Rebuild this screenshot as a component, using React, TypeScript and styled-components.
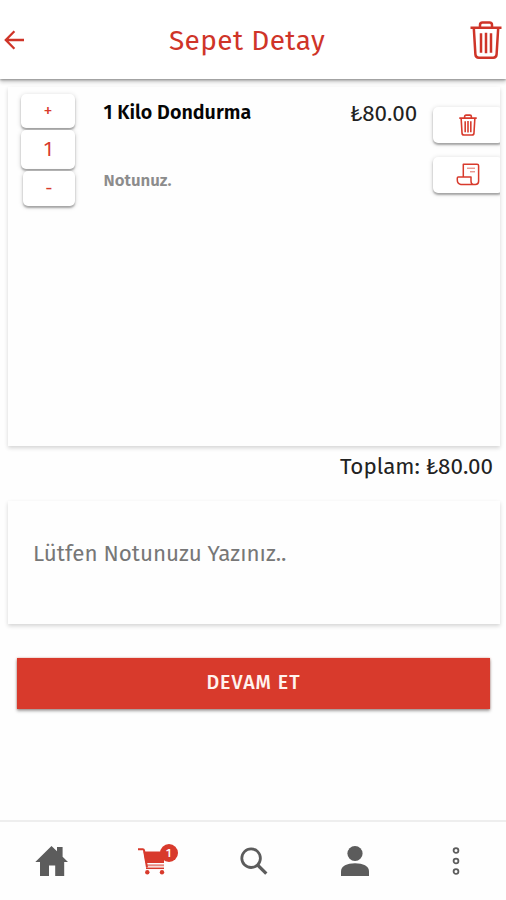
import React from "react";
import styled, { createGlobalStyle, css } from "styled-components";

const RED = "#d83a2c";
const INK_RED = "#cf3428";

const GlobalStyle = createGlobalStyle`
  *, *::before, *::after { box-sizing: border-box; }
  html, body { margin: 0; padding: 0; background: #fefefe; }
  body { font-family: "Fira Sans", "Noto Sans", sans-serif; color: #222; overflow: hidden; }
  button { font-family: inherit; border: 0; padding: 0; background: none; }
  svg { display: block; }
`;

const Screen = styled.div`
  width: 506px;
  height: 900px;
  display: flex;
  flex-direction: column;
  background: #fefefe;
`;

const Header = styled.header`
  flex: none;
  height: 79px;
  display: grid;
  grid-template-columns: 54px 1fr 66px;
  align-items: center;
  background: #fff;
  box-shadow: 0 1px 2px rgba(0, 0, 0, 0.3), 0 3px 4px rgba(0, 0, 0, 0.22);
  color: ${INK_RED};
`;

const BackButton = styled.button`
  padding-left: 4px;
  padding-top: 1px;
  color: inherit;
`;

const EmptyButton = styled.button`
  justify-self: end;
  padding-right: 4px;
  padding-top: 1px;
  color: inherit;
`;

/* Keeps each label on one line at its own size and tracking. */
const Label = styled.span<{ $size: number; $track?: number }>`
  display: inline-block;
  white-space: pre;
  font-size: ${(p) => p.$size}px;
  line-height: 30px;
  letter-spacing: ${(p) => p.$track ?? 0}px;
`;

const Title = styled.h1`
  margin: 0;
  padding-bottom: 1px;
  font-weight: 400;
  text-align: center;
`;

const cardShadow = css`
  background: #fefefe;
  box-shadow: 0 2px 4px rgba(0, 0, 0, 0.17);
`;

const CartFrame = styled.div`
  flex: none;
  margin: 8px 6px 0 8px;
  height: 359px;
  ${cardShadow}
`;

const CartItem = styled.section`
  height: 100%;
  display: flex;
  overflow: hidden;
`;

const Stepper = styled.div`
  width: 95.500px;
  padding: 7px 0 0 13px;
  display: flex;
  flex-direction: column;
  gap: 2px;
`;

const tileShadow = css`
  background: #fff;
  border-radius: 5px;
  box-shadow: 0 2px 2px rgba(0, 0, 0, 0.28), 0 1px 5px rgba(0, 0, 0, 0.18);
`;

const StepTile = styled.button<{ $height: number; $inset?: number; $size: number; $lift?: number }>`
  ${tileShadow}
  width: ${(p) => 54 - (p.$inset ?? 0)}px;
  height: ${(p) => p.$height}px;
  margin-left: ${(p) => p.$inset ?? 0}px;
  padding-bottom: ${(p) => p.$lift ?? 0}px;
  display: flex;
  align-items: center;
  justify-content: center;
  font-size: ${(p) => p.$size}px;
  line-height: 20px;
  color: ${RED};
`;

const ItemInfo = styled.div`
  flex: 1;
  display: flex;
  flex-direction: column;
  padding-top: 11px;
`;

const ItemName = styled.strong`
  height: 67px;
  color: #050505;
  font-weight: 600;
`;

const ItemNote = styled.span`
  font-weight: 600;
  color: #8c8c8c;
`;

const Price = styled.div`
  width: 83px;
  padding-top: 12px;
  color: #222;
`;

const ItemActions = styled.div`
  width: 67px;
  display: flex;
  flex-direction: column;
  gap: 14px;
  padding-top: 20px;
`;

const ActionTile = styled.button`
  ${tileShadow}
  width: 70px;
  height: 36px;
  display: flex;
  align-items: center;
  justify-content: center;
  color: ${RED};
`;

const Total = styled.div`
  flex: none;
  height: 55px;
  padding: 6px 13px 0 0;
  text-align: right;
  color: #222;
`;

const NoteCard = styled.section`
  flex: none;
  margin: 0 6px 0 8px;
  height: 123px;
  padding: 38px 0 0 25px;
  color: #777;
  ${cardShadow}
`;

const ContinueButton = styled.button`
  flex: none;
  margin: 34px 16px 0 17px;
  height: 51px;
  padding-bottom: 2px;
  color: #fff3ef;
  background: ${RED};
  box-shadow: 0 2px 3px rgba(0, 0, 0, 0.36), 0 0 2px rgba(190, 50, 30, 0.4);
  font-weight: 500;
`;

const TabBar = styled.nav`
  flex: none;
  margin-top: auto;
  height: 80px;
  padding-left: 1px;
  border-top: 2px solid #eeeeee;
  display: grid;
  grid-template-columns: repeat(5, 1fr);
  background: #fefefe;
`;

const Tab = styled.button<{ $active?: boolean }>`
  display: flex;
  align-items: center;
  justify-content: center;
  color: ${(p) => (p.$active ? RED : "#5c5c5c")};
`;

const CartBox = styled.span`
  position: relative;
  width: 40px;
  height: 40px;
  margin-left: 10px;
`;

const Badge = styled.span`
  position: absolute;
  left: 22px;
  top: 3px;
  width: 18px;
  height: 18px;
  border-radius: 50%;
  background: ${RED};
  color: #fff;
  font-size: 11.500px;
  line-height: 18px;
  font-weight: 500;
  text-align: center;
`;

const BackIcon = () => (
  <svg width="21" height="20" viewBox="0 0 21 20" fill="none" stroke="currentColor" strokeWidth="2.3">
    <path d="M20 10H1.8M10.4 1.3L1.8 10l8.600 8.7" />
  </svg>
);

const TrashIcon = ({ width, height, weight }: { width: number; height: number; weight: number }) => (
  <svg width={width} height={height} viewBox="0 0 32 38" fill="none" stroke="currentColor" strokeWidth={weight}>
    <path d="M.5 6.8h31M10 6.3V4q0-2.5 2.5-2.5h7Q22 1.500 22 4v2.300M3.800 7l1.600 26.400q.2 3.300 3.400 3.300h14.400q3.200 0 3.400-3.300L28.200 7M11 12.300v19.400M16 11.700v20.600M21 12.300v19.400" />
  </svg>
);

const ReceiptIcon = () => (
  <svg width="24" height="24" viewBox="0 0 24 24" fill="none" stroke="currentColor" strokeWidth="1.5" strokeLinejoin="round">
    <path d="M7.300 14V1.200h13.800q1.500 0 1.500 1.500v15.600q0 3.200-3.200 3.200H4.800Q1.300 20.800 1.300 17v-2q0-1 1-1H15v4.100q0 3.400 2.400 3.400" />
    <path d="M11 5.200h8M14 8.800h5" strokeWidth="1" opacity=".75" />
  </svg>
);

const HomeIcon = () => (
  <svg width="34" height="32" viewBox="0 0 34 32" fill="currentColor">
    <path d="M16.500 1l5.500 5.300V2h5.600v9.700L33 17h-3.800v14h-9V20.500H14V31H5V17H.3z" />
  </svg>
);

const CartIcon = () => (
  <svg width="40" height="40" viewBox="0 0 40 40" fill="none" stroke="currentColor">
    <path d="M0 8.200h4.800q1 0 1.200 1l3 17.300" strokeWidth="2" />
    <path d="M5.500 10.500H26V22H7.700z" fill="currentColor" stroke="none" />
    <path d="M8 24.300h18" strokeWidth="2" opacity=".6" />
    <path d="M8 27.300h18" strokeWidth="1.500" />
    <circle cx="9.300" cy="31.300" r="2.200" fill="currentColor" stroke="none" />
    <circle cx="24" cy="31.300" r="2.200" fill="currentColor" stroke="none" />
  </svg>
);

const SearchIcon = () => (
  <svg width="28" height="28" viewBox="0 0 28 28" fill="none" stroke="currentColor">
    <circle cx="11.100" cy="11.200" r="9.300" strokeWidth="2.800" />
    <path d="M17.600 18l8.700 8.600" strokeWidth="3.200" />
  </svg>
);

const PersonIcon = () => (
  <svg width="28" height="32" viewBox="0 0 28 32" fill="currentColor">
    <circle cx="14" cy="8.500" r="7.600" />
    <path d="M0 31v-4.500C0 21 6 18.300 14 18.300S28 21 28 26.500V31z" />
  </svg>
);

const MoreIcon = () => (
  <svg width="8" height="30" viewBox="0 0 8 30" fill="none" stroke="currentColor" strokeWidth="1.800">
    <circle cx="4" cy="4.500" r="2.400" />
    <circle cx="4" cy="15" r="2.400" />
    <circle cx="4" cy="25.500" r="2.400" />
  </svg>
);

export default function App() {
  return (
    <>
      <GlobalStyle />
      <Screen>
        <Header>
          <BackButton aria-label="Geri"><BackIcon /></BackButton>
          <Title><Label $size={28} $track={0.4}>Sepet Detay</Label></Title>
          <EmptyButton aria-label="Sepeti boşalt"><TrashIcon width={32} height={38} weight={2.500} /></EmptyButton>
        </Header>

        <CartFrame>
          <CartItem>
            <Stepper>
              <StepTile $height={34} $size={18}>+</StepTile>
              <StepTile $height={39} $size={20} $lift={2}>1</StepTile>
              <StepTile $height={35} $inset={2} $size={18} $lift={2}>-</StepTile>
            </Stepper>
            <ItemInfo>
              <ItemName><Label $size={19.700}>1 Kilo Dondurma</Label></ItemName>
              <ItemNote><Label $size={16.800}>Notunuz.</Label></ItemNote>
            </ItemInfo>
            <Price><Label $size={22.400}>₺80.00</Label></Price>
            <ItemActions>
              <ActionTile aria-label="Ürünü sil"><TrashIcon width={18} height={22} weight={2.800} /></ActionTile>
              <ActionTile aria-label="Ürün notu"><ReceiptIcon /></ActionTile>
            </ItemActions>
          </CartItem>
        </CartFrame>

        <Total><Label $size={22.400}>Toplam: ₺80.00</Label></Total>
        <NoteCard><Label $size={22.400}>Lütfen Notunuzu Yazınız..</Label></NoteCard>
        <ContinueButton><Label $size={19.600} $track={1}>DEVAM ET</Label></ContinueButton>

        <TabBar>
          <Tab aria-label="Ana sayfa"><HomeIcon /></Tab>
          <Tab $active aria-label="Sepet">
            <CartBox><CartIcon /><Badge>1</Badge></CartBox>
          </Tab>
          <Tab aria-label="Ara"><SearchIcon /></Tab>
          <Tab aria-label="Profil"><PersonIcon /></Tab>
          <Tab aria-label="Diğer"><MoreIcon /></Tab>
        </TabBar>
      </Screen>
    </>
  );
}
